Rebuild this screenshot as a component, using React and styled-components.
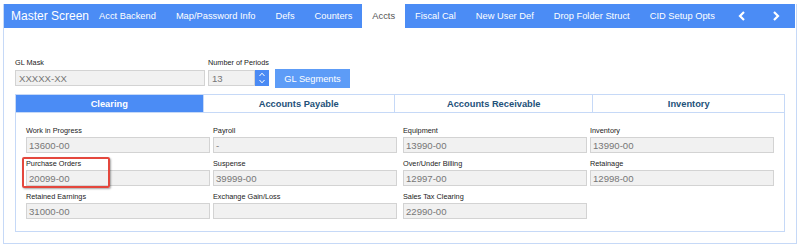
import React from "react";
import styled, { createGlobalStyle } from "styled-components";

const Global = createGlobalStyle`
  html, body { margin: 0; padding: 0; background: #fff; }
  body { font-family: "Liberation Sans", Arial, sans-serif; }
  * { box-sizing: border-box; }
`;

const Page = styled.div`
  padding: 4px 0 0 3px;
  width: 800px;
  height: 247px;
`;

const Frame = styled.div`
  width: 794px;
  height: 240px;
  border: 1px solid #c6d9f7;
  border-top: none;
  display: flex;
  flex-direction: column;
`;

const TopBar = styled.div`
  height: 24px;
  background: #4b8cf5;
  display: flex;
  align-items: stretch;
  margin-right: 1px;
`;

const Title = styled.div`
  color: #fff;
  font-size: 12px;
  padding: 0 0 0 7px;
  display: flex;
  align-items: center;
  white-space: nowrap;
`;

const Tab = styled.div`
  display: flex;
  align-items: center;
  padding: 0 10px;
  font-size: 9.3px;
  white-space: nowrap;
  color: ${(p) => (p.$active ? "#555" : "#fff")};
  background: ${(p) => (p.$active ? "#fff" : "transparent")};
`;

const Arrow = styled.div`
  width: 34px;
  display: flex;
  align-items: center;
  justify-content: center;
`;

const Body = styled.div`
  padding: 30px 11px 0 11px;
  display: flex;
  flex-direction: column;
`;

const FormRow = styled.div`
  display: flex;
  align-items: flex-end;
  gap: 3px;
`;

const Group = styled.div`
  display: flex;
  flex-direction: column;
`;

const SmallLabel = styled.div`
  font-size: 7.3px;
  line-height: 10px;
  color: #222;
  margin-bottom: ${(p) => p.$mb || 1}px;
  white-space: nowrap;
`;

const Input = styled.div`
  width: ${(p) => p.$w}px;
  height: ${(p) => p.$h || 16}px;
  background: #f1f1f1;
  border: 1px solid #d3d3d3;
  color: #777;
  font-size: 9.6px;
  padding-left: ${(p) => p.$pl || 2}px;
  display: flex;
  align-items: center;
`;

const SpinWrap = styled.div`
  display: flex;
`;

const Spinner = styled.div`
  width: 14px;
  height: 16px;
  background: #4a8af4;
  display: flex;
  align-items: center;
  justify-content: center;
`;

const Button = styled.div`
  width: 75px;
  height: 19px;
  background: #5d9cf7;
  color: #fff;
  font-size: 9.3px;
  display: flex;
  align-items: center;
  justify-content: center;
  margin-left: 3px;
  margin-bottom: -2px;
`;

const TabHeader = styled.div`
  margin-top: 8px;
  height: 19px;
  display: grid;
  grid-template-columns: 187fr 192fr 199fr 192fr;
  border: 1px solid #c6d9f7;
`;

const HeadCell = styled.div`
  display: flex;
  align-items: center;
  justify-content: center;
  font-size: 9.3px;
  font-weight: bold;
  color: ${(p) => (p.$active ? "#fff" : "#235179")};
  background: ${(p) => (p.$active ? "#4b8cf5" : "#fff")};
  border-left: ${(p) => (p.$first ? "none" : "1px solid #c6d9f7")};
`;

const Panel = styled.div`
  border: 1px solid #c6d9f7;
  border-top: none;
  padding: 13px 10px 12px 10px;
  display: flex;
  flex-direction: column;
  gap: 6px;
  height: 119px;
`;

const FieldRow = styled.div`
  display: grid;
  grid-template-columns: 1fr 1fr;
  column-gap: 6px;
`;

const Half = styled.div`
  display: grid;
  grid-template-columns: 184px 184px;
  column-gap: 3px;
`;

const Field = styled.div`
  position: relative;
  display: flex;
  flex-direction: column;
`;

const Highlight = styled.div`
  position: absolute;
  left: -4px;
  top: -2px;
  width: 88px;
  height: 31px;
  border: 2px solid #e4473d;
  border-radius: 2px;
  box-shadow: 1px 1px 2px rgba(0, 0, 0, 0.35);
  pointer-events: none;
`;

const Chevron = ({ dir }) => (
  <svg width="8" height="10" viewBox="0 0 8 10">
    <path
      d={dir === "left" ? "M6 1 L2 5 L6 9" : "M2 1 L6 5 L2 9"}
      fill="none"
      stroke="#fff"
      strokeWidth="2.2"
    />
  </svg>
);

const SpinIcon = () => (
  <svg width="8" height="14" viewBox="0 0 8 14">
    <path d="M1.5 5 L4 2.2 L6.5 5" fill="none" stroke="#fff" strokeWidth="1" />
    <path d="M1.5 9 L4 11.8 L6.5 9" fill="none" stroke="#fff" strokeWidth="1" />
  </svg>
);

const tabs = [
  "Acct Backend",
  "Map/Password Info",
  "Defs",
  "Counters",
  "Accts",
  "Fiscal Cal",
  "New User Def",
  "Drop Folder Struct",
  "CID Setup Opts",
];

const rows = [
  [
    ["Work in Progress", "13600-00"],
    ["Payroll", "-"],
    ["Equipment", "13990-00"],
    ["Inventory", "13990-00"],
  ],
  [
    ["Purchase Orders", "20099-00", true],
    ["Suspense", "39999-00"],
    ["Over/Under Billing", "12997-00"],
    ["Retainage", "12998-00"],
  ],
  [
    ["Retained Earnings", "31000-00"],
    ["Exchange Gain/Loss", ""],
    ["Sales Tax Clearing", "22990-00"],
    null,
  ],
];

const renderField = (f, i) =>
  f ? (
    <Field key={i}>
      <SmallLabel>{f[0]}</SmallLabel>
      <Input $w={184}>{f[1]}</Input>
      {f[2] && <Highlight />}
    </Field>
  ) : (
    <div key={i} />
  );

export default function App() {
  return (
    <Page>
      <Global />
      <Frame>
        <TopBar>
          <Title>Master Screen</Title>
          {tabs.map((t) => (
            <Tab key={t} $active={t === "Accts"}>
              {t}
            </Tab>
          ))}
          <Arrow>
            <Chevron dir="left" />
          </Arrow>
          <Arrow>
            <Chevron dir="right" />
          </Arrow>
        </TopBar>
        <Body>
          <FormRow>
            <Group>
              <SmallLabel $mb={2}>GL Mask</SmallLabel>
              <Input $w={190} $pl={3}>XXXXX-XX</Input>
            </Group>
            <Group>
              <SmallLabel $mb={2}>Number of Periods</SmallLabel>
              <SpinWrap>
                <Input $w={47} $pl={3}>13</Input>
                <Spinner>
                  <SpinIcon />
                </Spinner>
              </SpinWrap>
            </Group>
            <Button>GL Segments</Button>
          </FormRow>
          <TabHeader>
            <HeadCell $active $first>Clearing</HeadCell>
            <HeadCell>Accounts Payable</HeadCell>
            <HeadCell>Accounts Receivable</HeadCell>
            <HeadCell>Inventory</HeadCell>
          </TabHeader>
          <Panel>
            {rows.map((r, ri) => (
              <FieldRow key={ri}>
                <Half>{r.slice(0, 2).map(renderField)}</Half>
                <Half>{r.slice(2, 4).map(renderField)}</Half>
              </FieldRow>
            ))}
          </Panel>
        </Body>
      </Frame>
    </Page>
  );
}
